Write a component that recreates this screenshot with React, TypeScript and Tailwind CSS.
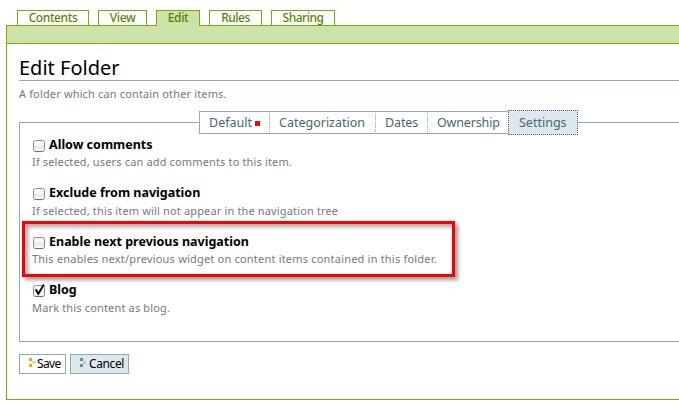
import React from 'react';

type Tab = { label: string; box: string; text: string; active?: boolean };

const views: Tab[] = [
  { label: 'Contents', box: 'w-[72px] mr-[9px]', text: 'tracking-[-0.4px]' },
  { label: 'View', box: 'w-[49px] mr-[9px]', text: 'tracking-[-0.4px]' },
  { label: 'Edit', box: 'w-[44px] mr-[9px]', text: 'tracking-[-0.4px]', active: true },
  { label: 'Rules', box: 'w-[53px] mr-[9px]', text: 'tracking-[-0.5px]' },
  { label: 'Sharing', box: 'w-[64px]', text: 'tracking-[-0.5px]' },
];

function Checkbox({ checked }: { checked?: boolean }) {
  return (
    <svg width="14" height="16" viewBox="0 0 14 16" className="block shrink-0">
      <defs>
        <linearGradient id="face" x1="0" y1="0" x2="0" y2="1">
          <stop offset="0" stopColor="#fff" />
          <stop offset="0.45" stopColor="#f4f4f4" />
          <stop offset="0.5" stopColor="#e6e6e6" />
          <stop offset="1" stopColor="#fdfdfd" />
        </linearGradient>
      </defs>
      <rect x="1.5" y="3.5" width="11" height="11" rx="2" fill="url(#face)" stroke="#8c8c8c" />
      <path d="M3 14.6h8" stroke="#666" strokeWidth="0.8" />
      {checked && <path d="M3.7 7.2L6.3 11.8L11.9 2.4" fill="none" stroke="#000" strokeWidth="1.9" />}
    </svg>
  );
}

function Field({ label, help, helpStyle, checked }: { label: string; help: string; helpStyle: string; checked?: boolean }) {
  return (
    <div>
      <div className="flex h-4 items-center">
        <Checkbox checked={checked} />
        <span className="ml-[3px] whitespace-nowrap text-[12.5px] font-bold leading-4 text-black">{label}</span>
      </div>
      <p className={'whitespace-nowrap text-[11px] leading-4 text-[#76797c] ' + helpStyle}>{help}</p>
    </div>
  );
}

function Marker({ color, tip }: { color: string; tip: string }) {
  return (
    <svg width="6" height="9" viewBox="0 0 6 9" shapeRendering="crispEdges" className="block">
      <path d="M0 0h3v3H0zM0 6h3v3H0z" fill={color} />
      <path d="M3 3h3v3H3z" fill={tip} />
    </svg>
  );
}

export default function App() {
  return (
    <div className="h-[403px] w-[679px] overflow-hidden bg-white pl-[6px] pt-[10px] font-['Noto_Sans','Open_Sans',sans-serif]">
      <nav className="flex h-[15px] pl-[11px]">
        {views.map((v) => (
          <a
            key={v.label}
            className={
              'relative flex justify-center border border-b-0 border-[#74ae0b] text-[12px] font-medium leading-[14px] text-[#578308] ' +
              v.box + (v.active ? ' h-4 bg-[#cde2a7]' : ' h-[15px] bg-white')
            }
          >
            <span className={v.text}>{v.label}</span>
          </a>
        ))}
      </nav>
      <div className="h-[19px] border border-r-0 border-[#74ae0b] bg-[#cde2a7]" />
      <main className="h-[356px] border-b border-l border-[#74ae0b] pl-3 pt-[11px]">
        <h1 className="h-[26px] border-b border-[#8cacbb] text-[20px] leading-[26px] tracking-[0px] text-black">Edit Folder</h1>
        <p className="mt-[5px] text-[11px] leading-4 tracking-[0.15px] text-[#76797c]">A folder which can contain other items.</p>
        <div className="mt-[8px] flex h-6 items-center text-[12.5px] leading-[20px] text-[#436976]">
          <div className="h-px w-[180px] bg-[#8cacbb]" />
          <div className="flex h-[23px] w-[309px] border border-r-0 border-[#8cacbb] py-px">
            <div className="flex w-[70px] items-start border-r border-dotted border-[#8cacbb] pl-[9px]">
              <span className="w-[43px]">Default</span>
              <i className="ml-[3px] mt-[8px] h-[5px] w-[5px] bg-[#f00]" />
            </div>
            <div className="w-[106px] border-r border-dotted border-[#8cacbb] pl-[9px]">Categorization</div>
            <div className="w-[52px] border-r border-dotted border-[#8cacbb] pl-[9px] tracking-[-0.1px]">Dates</div>
            <div className="pl-[9px] tracking-[-0.15px]">Ownership</div>
          </div>
          <div className="h-[25px] w-[70px] border border-dotted border-[#436976] bg-[#dee7ec] pl-[10px] leading-6">Settings</div>
          <div className="h-px flex-1 bg-[#8cacbb]" />
        </div>
        <section className="-mt-3 h-[220px] border-b border-l border-[#8cacbb] pl-3 pt-[15px]">
          <Field label="Allow comments" help="If selected, users can add comments to this item." helpStyle="mt-px tracking-[0.15px]" />
          <div className="h-[15px]" />
          <Field label="Exclude from navigation" help="If selected, this item will not appear in the navigation tree" helpStyle="mt-[2px] tracking-[0.15px]" />
          <div className="relative z-10 -ml-[10px] mt-[2px] h-[56px] w-[433px] border-[3px] border-[#fa0000] pl-[7px] pt-[10px] shadow-[3px_3px_4px_rgba(0,0,0,0.4),inset_3px_3px_4px_rgba(0,0,0,0.35)]">
            <Field label="Enable next previous navigation" help="This enables next/previous widget on content items contained in this folder." helpStyle="mt-px tracking-[0.2px]" />
          </div>
          <div className="h-[5px]" />
          <Field checked label="Blog" help="Mark this content as blog." helpStyle="mt-[2px] tracking-[0.16px]" />
        </section>
        <div className="mt-[12px] flex gap-1 text-[12px] leading-[18px] text-black">
          <button className="flex h-5 w-[47px] border border-[#8cacbb] bg-white pl-[9px]">
            <span className="mt-[3px]"><Marker color="#ffa200" tip="#ffd387" /></span>
            <span className="ml-[2px] tracking-[-0.6px]">Save</span>
          </button>
          <button className="flex h-5 w-[59px] border border-[#8cacbb] bg-[#dee7ec] pl-[9px]">
            <span className="mt-[3px]"><Marker color="#628ea2" tip="#b3c8d2" /></span>
            <span className="ml-[3px] tracking-[-0.4px]">Cancel</span>
          </button>
        </div>
      </main>
    </div>
  );
}
